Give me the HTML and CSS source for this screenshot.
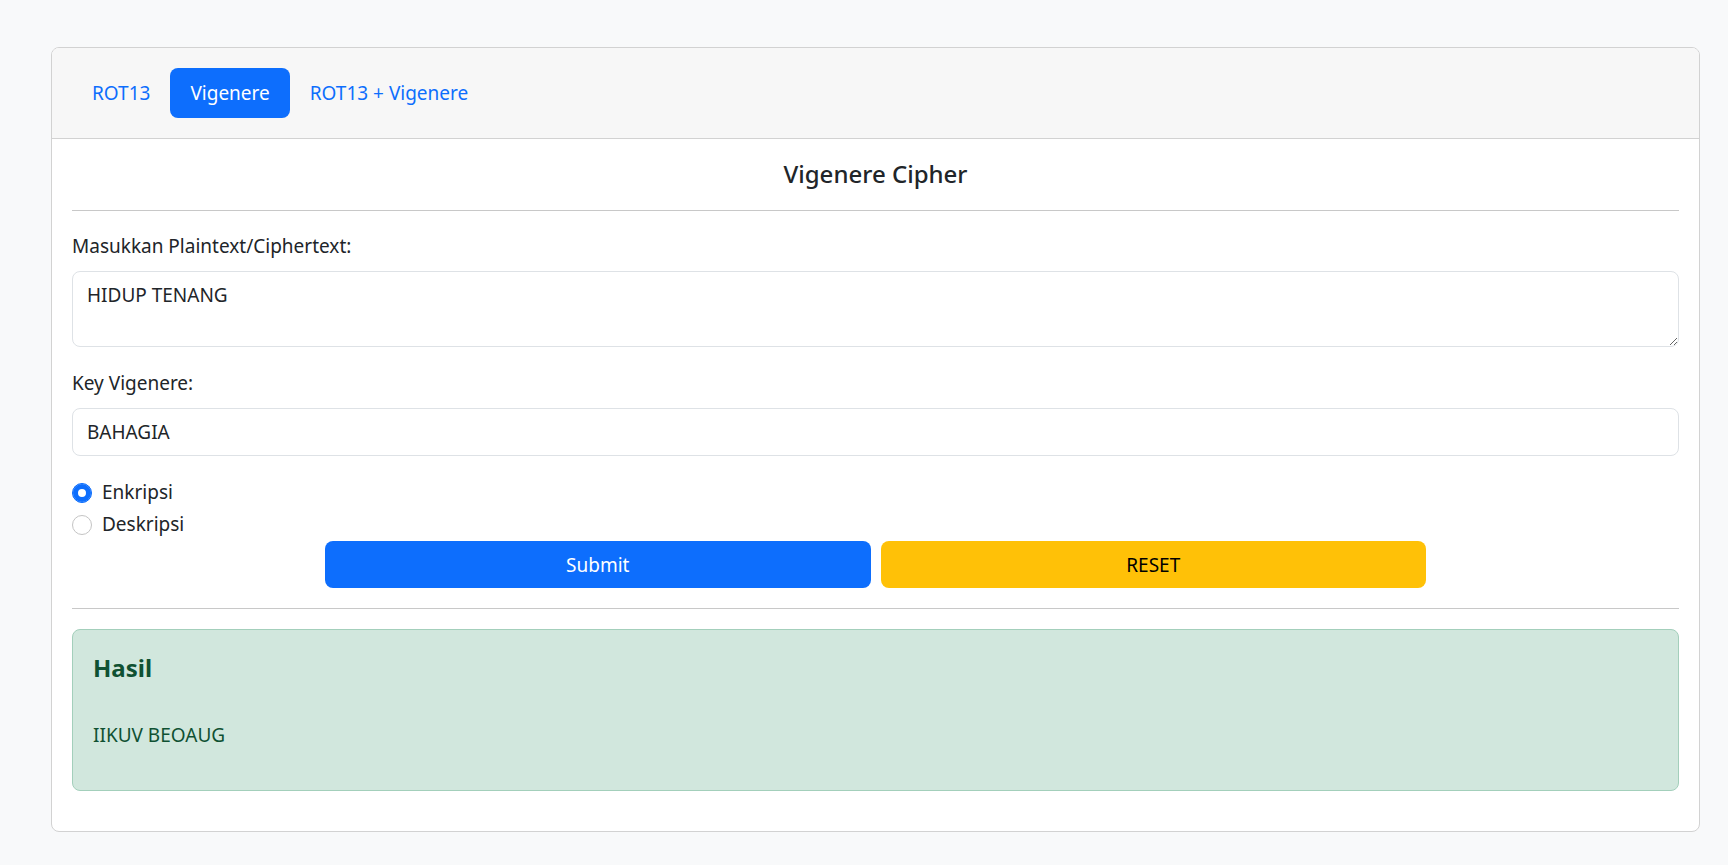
FILE: index.html
```html
<!DOCTYPE html>
<html lang="id">
<head>
<meta charset="utf-8">
<title>Vigenere Cipher</title>
<link rel="stylesheet" href="styles.css">
</head>
<body>
<div class="page">
  <div class="card">
    <div class="card-header">
      <nav class="pills">
        <a class="pill" href="#">ROT13</a>
        <a class="pill active" href="#">Vigenere</a>
        <a class="pill" href="#">ROT13 + Vigenere</a>
      </nav>
    </div>
    <div class="card-body">
      <h4 class="title">Vigenere Cipher</h4>
      <hr class="divider">
      <form class="form">
        <div class="field">
          <label class="label" for="text">Masukkan Plaintext/Ciphertext:</label>
          <textarea id="text" class="control textarea" rows="2">HIDUP TENANG</textarea>
        </div>
        <div class="field">
          <label class="label" for="key">Key Vigenere:</label>
          <input id="key" class="control" type="text" value="BAHAGIA">
        </div>
        <div class="checks">
          <label class="check"><input class="radio" type="radio" name="mode" checked>Enkripsi</label>
          <label class="check"><input class="radio" type="radio" name="mode">Deskripsi</label>
        </div>
        <div class="actions">
          <button class="btn btn-primary" type="button">Submit</button>
          <button class="btn btn-warning" type="reset">RESET</button>
        </div>
      </form>
      <hr class="divider divider-bottom">
      <div class="alert">
        <h4 class="alert-heading">Hasil</h4>
        <p class="result">IIKUV BEOAUG</p>
      </div>
    </div>
  </div>
</div>
</body>
</html>
```
FILE: styles.css
```css
* { box-sizing: border-box; }

html, body {
  margin: 0;
  padding: 0;
}

body {
  background: #f8f9fa;
  color: #212529;
  font-family: "Noto Sans", "Open Sans", sans-serif;
  font-size: 19px;
  line-height: 30px;
}

.page {
  padding: 47px 28px 32px 51px;
}

.card {
  background: #fff;
  border: 1px solid #d2d2d2;
  border-radius: 8px;
  overflow: hidden;
}

.card-header {
  background: #f7f7f7;
  border-bottom: 1px solid #d2d2d2;
  padding: 20px;
}

.pills {
  display: flex;
  align-items: center;
}

.pill {
  display: block;
  height: 50px;
  padding: 10px 20px;
  color: #0d6efd;
  text-decoration: none;
  border-radius: 8px;
}

.pill.active {
  background: #0d6efd;
  color: #fff;
}

.card-body {
  padding: 17px 20px 20px;
}

.title {
  margin: 0;
  font-size: 24px;
  line-height: 36px;
  font-weight: 500;
  text-align: center;
}

.divider {
  margin: 18px 0 20px;
  border: 0;
  border-top: 1px solid #c8c8c8;
  height: 0;
}

.divider-bottom {
  margin-top: 20px;
}

.form {
  margin: 0;
}

.field {
  margin-bottom: 21px;
}

.label {
  display: block;
  margin-bottom: 10px;
}

.control {
  display: block;
  width: 100%;
  padding: 8px 14px;
  font: inherit;
  color: #212529;
  background: #fff;
  border: 1px solid #dee2e6;
  border-radius: 8px;
  height: 48px;
  outline: none;
}

.textarea {
  height: 76px;
  resize: vertical;
}

.checks {
  display: flex;
  flex-direction: column;
}

.check {
  display: block;
  padding-left: 30px;
  min-height: 30px;
  margin-bottom: 2px;
}

.radio {
  appearance: none;
  -webkit-appearance: none;
  float: left;
  width: 20px;
  height: 20px;
  margin: 6px 0 0 -30px;
  border: 1px solid #c4c4c4;
  border-radius: 50%;
  background: #fff;
}

.radio:checked {
  border-color: #0d6efd;
  background: #0d6efd;
  box-shadow: inset 0 0 0 5px #0d6efd, inset 0 0 0 10px #fff;
}

.actions {
  display: grid;
  grid-template-columns: 1fr 1fr;
  gap: 10px;
  width: 1101px;
  margin: 0 auto;
}

.btn {
  height: 47px;
  font: inherit;
  border: 1px solid transparent;
  border-radius: 8px;
  cursor: pointer;
}

.btn-primary {
  background: #0d6efd;
  color: #fff;
}

.btn-warning {
  background: #ffc107;
  color: #000;
}

.alert {
  background: #d1e7dd;
  border: 1px solid #a3cfbb;
  border-radius: 8px;
  color: #0f5132;
  padding: 20px;
  margin-bottom: 20px;
}

.alert-heading {
  margin: 0 0 34px;
  font-size: 24px;
  line-height: 36px;
  font-weight: 700;
}

.result {
  margin: 0 0 20px;
}
```
